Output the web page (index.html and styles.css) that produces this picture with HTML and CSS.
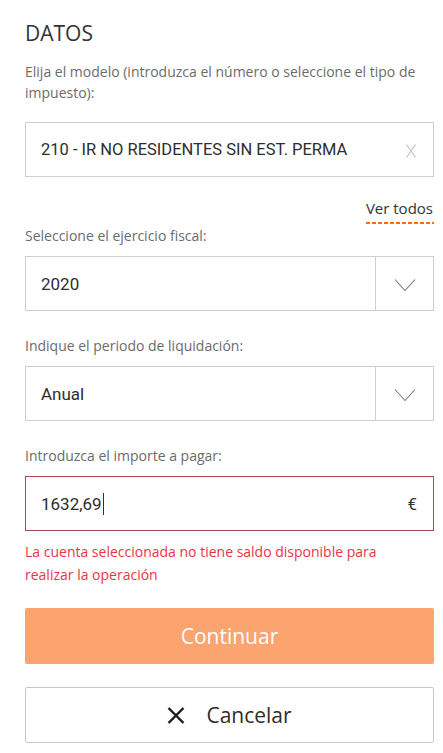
FILE: index.html
```html
<!DOCTYPE html>
<html lang="es">
<head>
<meta charset="utf-8">
<title>Datos</title>
<link rel="stylesheet" href="styles.css">
</head>
<body>
<main class="page">
  <h1 class="title">DATOS</h1>

  <div class="field">
    <div class="label label-first">Elija el modelo (introduzca el número o seleccione el tipo de impuesto):</div>
    <div class="box">
      <div class="value value-model">210 - IR NO RESIDENTES SIN EST. PERMA</div>
      <span class="clear">
        <svg width="10" height="14" viewBox="0 0 10 14"><path d="M0.5 0.5 L9.5 13.5 M9.5 0.5 L0.5 13.5" stroke="#bdbdbd" stroke-width="1.1" fill="none"/></svg>
      </span>
    </div>
  </div>

  <div class="link-row"><a class="link" href="#">Ver todos</a></div>

  <div class="field field-tight">
    <div class="label">Seleccione el ejercicio fiscal:</div>
    <div class="box select">
      <div class="value">2020</div>
      <div class="arrow">
        <svg width="22" height="14" viewBox="0 0 22 14"><path d="M1 1.5 L11 12.5 L21 1.5" stroke="#7a7a7a" stroke-width="1.1" fill="none"/></svg>
      </div>
    </div>
  </div>

  <div class="field">
    <div class="label">Indique el periodo de liquidación:</div>
    <div class="box select">
      <div class="value">Anual</div>
      <div class="arrow">
        <svg width="22" height="14" viewBox="0 0 22 14"><path d="M1 1.5 L11 12.5 L21 1.5" stroke="#7a7a7a" stroke-width="1.1" fill="none"/></svg>
      </div>
    </div>
  </div>

  <div class="field">
    <div class="label">Introduzca el importe a pagar:</div>
    <div class="box box-error">
      <div class="value">1632,69<span class="caret"></span></div>
      <span class="currency">€</span>
    </div>
    <p class="error">La cuenta seleccionada no tiene saldo disponible para realizar la operación</p>
  </div>

  <button class="btn btn-primary" type="button">Continuar</button>
  <button class="btn btn-secondary" type="button">
    <svg class="btn-icon" width="18" height="17" viewBox="0 0 18 17"><path d="M1.5 1 L16.5 16 M16.5 1 L1.5 16" stroke="#1a1a1a" stroke-width="2.4" fill="none"/></svg>
    <span>Cancelar</span>
  </button>
</main>
</body>
</html>
```

FILE: styles.css
```css
* { box-sizing: border-box; }

html, body {
  margin: 0;
  padding: 0;
  background: #ffffff;
}

body {
  font-family: "Open Sans", "Noto Sans", Arial, sans-serif;
  color: #333333;
}

.page {
  padding: 19px 9px 0 25px;
  display: flex;
  flex-direction: column;
}

.title {
  margin: 0 0 14px;
  font-size: 21px;
  line-height: 28px;
  font-weight: 400;
  color: #333333;
}

.field {
  display: flex;
  flex-direction: column;
  margin-top: 24px;
}

.title + .field { margin-top: 0; }
.field-tight { margin-top: 1px; }

.label {
  font-size: 14px;
  line-height: 21px;
  color: #6b6b6b;
  margin-bottom: 10px;
}

.label-first {
  margin-bottom: 19px;
}

.box {
  height: 55px;
  border: 1px solid #cfcfcf;
  display: flex;
  align-items: center;
  background: #ffffff;
}

.value {
  flex: 1;
  min-width: 0;
  padding-left: 15px;
  font-family: Roboto, "Open Sans", Arial, sans-serif;
  font-size: 17px;
  color: #2e2e2e;
  white-space: nowrap;
  display: flex;
  align-items: center;
}

.value-model {
  font-size: 16.5px;
}

.clear {
  width: 10px;
  height: 14px;
  margin-right: 17px;
  display: flex;
  margin-top: 2px;
}

.select .arrow {
  width: 58px;
  height: 100%;
  border-left: 1px solid #cfcfcf;
  display: flex;
  align-items: center;
  justify-content: center;
  padding-top: 3px;
}

.link-row {
  display: flex;
  justify-content: flex-end;
  margin-top: 21px;
}

.link {
  display: inline-block;
  font-size: 15px;
  line-height: 20px;
  color: #333333;
  text-decoration: none;
  padding-bottom: 5px;
  background-image: repeating-linear-gradient(90deg, #ff6a10 0 4px, transparent 4px 6px);
  background-repeat: no-repeat;
  background-size: 100% 2px;
  background-position: 0 100%;
  height: 26px;
  padding-right: 1px;
}

.box-error {
  border-color: #b04a50;
}

.caret {
  display: inline-block;
  width: 1px;
  height: 22px;
  background: #333333;
  margin-left: 1px;
}

.currency {
  font-family: Roboto, "Open Sans", Arial, sans-serif;
  font-size: 17px;
  color: #333333;
  margin-right: 16px;
}

.error {
  margin: 9px 0 0;
  max-width: 380px;
  font-size: 14px;
  line-height: 23px;
  color: #ea3448;
}

.btn {
  width: 100%;
  height: 56px;
  font-family: "Open Sans", "Noto Sans", Arial, sans-serif;
  font-size: 21px;
  border-radius: 2px;
  display: flex;
  align-items: center;
  justify-content: center;
  cursor: pointer;
}

.btn-primary {
  margin-top: 22px;
  background: #fca46f;
  color: #ffffff;
  border: 0;
}

.btn-secondary {
  margin-top: 23px;
  background: #ffffff;
  color: #2e2e2e;
  border: 1px solid #c6c6c6;
  gap: 21px;
}

.btn-icon {
  flex: none;
}
```
